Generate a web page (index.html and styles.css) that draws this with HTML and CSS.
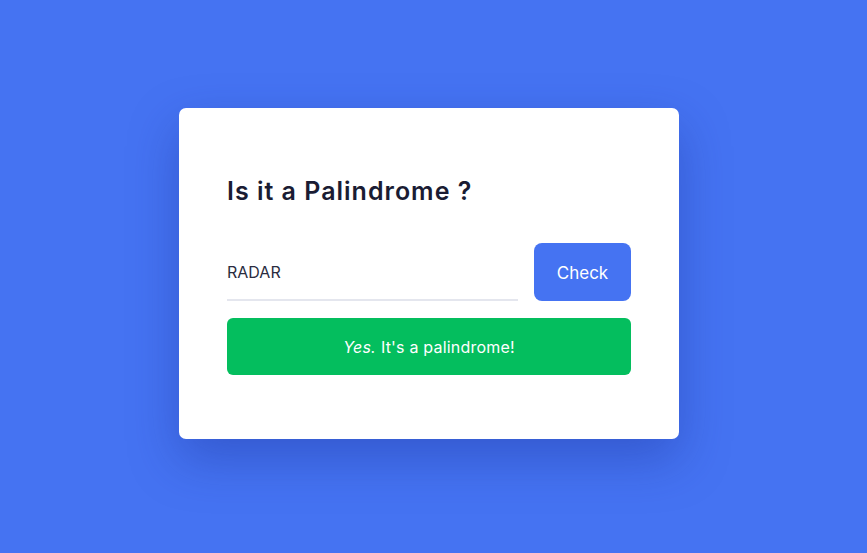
FILE: index.html
```html
<!DOCTYPE html>
<html lang="en">
<head>
<meta charset="utf-8">
<title>Palindrome Checker</title>
<link rel="stylesheet" href="styles.css">
</head>
<body>
<main class="page">
  <section class="card">
    <h1 class="title">Is it a Palindrome ?</h1>
    <div class="row">
      <input class="field" type="text" value="RADAR">
      <button class="btn" type="button">Check</button>
    </div>
    <div class="result"><em>Yes.</em> It's a palindrome!</div>
  </section>
</main>
</body>
</html>
```

FILE: styles.css
```css
* { box-sizing: border-box; }
html, body { margin: 0; padding: 0; }
body {
  background: #4573f2;
  font-family: "Inter", "Noto Sans", sans-serif;
  height: 553px;
  overflow: hidden;
}
.page {
  display: flex;
  justify-content: center;
  padding-top: 108px;
  padding-right: 9px;
}
.card {
  width: 500px;
  height: 331px;
  background: #ffffff;
  border-radius: 7px;
  padding: 64px 48px;
  box-shadow: 0 20px 50px rgba(20, 40, 140, 0.35);
}
.title {
  margin: 0;
  font-size: 25px;
  line-height: 39px;
  font-weight: 600;
  letter-spacing: 1px;
  color: #1a1c33;
}
.row {
  display: flex;
  gap: 16px;
  margin-top: 32px;
  height: 58px;
}
.field {
  flex: 1;
  border: none;
  border-bottom: 2px solid #e4e6ee;
  outline: none;
  font-family: inherit;
  font-size: 16px;
  color: #2a2c40;
  padding: 2px 0 0;
  background: transparent;
}
.btn {
  width: 97px;
  border: none;
  border-radius: 8px;
  background: #4573f2;
  color: #ffffff;
  font-family: inherit;
  font-size: 17px;
  padding: 2px 0 0;
}
.result {
  margin-top: 17px;
  height: 57px;
  border-radius: 6px;
  background: #04be5e;
  color: #ffffff;
  font-size: 16px;
  letter-spacing: 0.2px;
  display: flex;
  align-items: center;
  justify-content: center;
  gap: 5px;
}
.result em { font-style: italic; }
```
